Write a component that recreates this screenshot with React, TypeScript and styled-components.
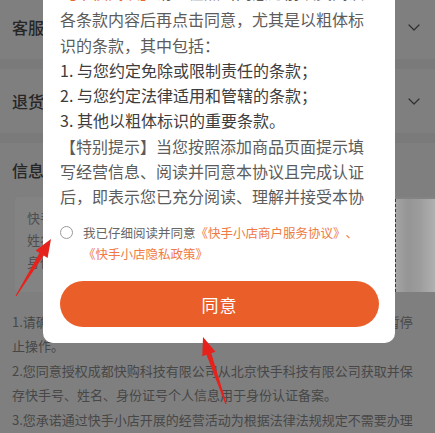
import React from "react";
import styled, { createGlobalStyle } from "styled-components";

const GlobalStyle = createGlobalStyle`
  html, body {
    margin: 0;
    padding: 0;
    width: 435px;
    height: 433px;
    overflow: hidden;
    background: #7f7f7f;
  }
  body {
    font-family: "Noto Sans CJK SC", "Noto Sans", sans-serif;
    text-spacing-trim: space-all;
  }
  * { box-sizing: border-box; }
`;

const Page = styled.div`
  position: relative;
  width: 435px;
  height: 433px;
  overflow: hidden;
  background: #7f7f7f;
`;

const Content = styled.div`
  margin-top: -5px;
  display: flex;
  flex-direction: column;
`;

const SectionRow = styled.div<{ $height?: number }>`
  height: ${(p) => p.$height ?? 64}px;
  display: flex;
  align-items: center;
  justify-content: space-between;
  padding: 0 15px 0 12px;
`;

const RowTitle = styled.span`
  font-size: 16px;
  font-weight: 500;
  color: #262626;
  line-height: 20px;
`;

const Divider = styled.div`
  height: 10px;
  background: #7a7a7a;
`;

const InfoCard = styled.div`
  margin-left: 15px;
  height: 95px;
  display: flex;
  justify-content: space-between;
  background: #838383;
  border-radius: 4px 0 0 4px;
`;

const CardFields = styled.div`
  padding: 10px 0 0 12px;
  font-size: 13px;
  line-height: 22px;
  color: #4e4e4e;
`;

const CardImage = styled.div`
  width: 40px;
  margin-top: 2px;
  border-left: 1px dashed #3a3a3a;
  background: linear-gradient(
    90deg,
    #a4a4a4 0%,
    #959595 30%,
    #9c9c9c 60%,
    #b0b0b0 100%
  );
`;

const Notes = styled.div`
  margin-top: 18px;
  padding: 0 12px;
  font-size: 13px;
  line-height: 23.5px;
  color: #474747;
`;

const Note = styled.p`
  margin: 0 0 2px;
`;

const Modal = styled.div`
  position: absolute;
  top: -20px;
  left: 43px;
  width: 352px;
  background: #ffffff;
  border-radius: 10px;
  padding: 0 16px 16px 17px;
  z-index: 2;
`;

const Terms = styled.div`
  height: 230px;
  overflow: hidden;
  padding-right: 8px;
  font-size: 16px;
  line-height: 25.3px;
  color: #5c5c5c;
`;

const TermPara = styled.div<{ $gap?: number }>`
  margin-bottom: ${(p) => p.$gap ?? 0}px;
`;

const TermItem = styled.div`
  color: #3d3d3d;
`;

const Mark = styled.span`
  color: #e8692f;
`;

const AgreeRow = styled.div`
  margin-top: 11.5px;
  display: flex;
  align-items: flex-start;
  gap: 10px;
  font-size: 12.5px;
  line-height: 21px;
  color: #666666;
`;

const Radio = styled.span`
  flex-shrink: 0;
  width: 13px;
  height: 13px;
  margin-top: 4px;
  border: 1px solid #9a9a9a;
  border-radius: 50%;
`;

const AgreeText = styled.div`
  flex: 1;
`;

const LinkText = styled.span`
  color: #ef7a44;
  white-space: nowrap;
`;

const ConfirmButton = styled.button`
  display: block;
  width: 100%;
  margin-top: 17.5px;
  height: 46px;
  border: none;
  border-radius: 23px;
  background: #ea5f29;
  color: #ffffff;
  font-family: inherit;
  font-size: 17px;
  letter-spacing: 1px;
`;

const Annotations = styled.svg`
  position: absolute;
  left: 0;
  top: 0;
  width: 435px;
  height: 433px;
  pointer-events: none;
  z-index: 3;
`;

const Chevron = () => (
  <svg width="12" height="7" viewBox="0 0 12 7" fill="none">
    <polyline
      points="1,1 6,6 11,1"
      stroke="#2f2f2f"
      strokeWidth="1.2"
      strokeLinecap="round"
      strokeLinejoin="round"
    />
  </svg>
);

export default function App() {
  return (
    <>
      <GlobalStyle />
      <Page>
        <Content>
          <SectionRow>
            <RowTitle>客服</RowTitle>
            <Chevron />
          </SectionRow>
          <Divider />
          <SectionRow>
            <RowTitle>退货</RowTitle>
            <Chevron />
          </SectionRow>
          <Divider />
          <SectionRow $height={54}>
            <RowTitle>信息</RowTitle>
          </SectionRow>
          <InfoCard>
            <CardFields>
              <div>快手号：</div>
              <div>姓名：</div>
              <div>身份证号：</div>
            </CardFields>
            <CardImage />
          </InfoCard>
          <Notes>
            <Note>
              1.请确认以上填写信息真实有效，如信息有误，平台将对您的店铺暂停止操作。
            </Note>
            <Note>
              2.您同意授权成都快购科技有限公司从北京快手科技有限公司获取并保存快手号、姓名、身份证号个人信息用于身份认证备案。
            </Note>
            <Note>
              3.您承诺通过快手小店开展的经营活动为根据法律法规规定不需要办理市场主体登记的经营活动。
            </Note>
          </Notes>
        </Content>

        <Modal>
          <Terms>
            <TermPara $gap={2}>
              <Mark>【审慎阅读】</Mark>请您在点击同意之前认真阅读
            </TermPara>
            <TermPara>
              各条款内容后再点击同意，尤其是以粗体标识的条款，其中包括：
            </TermPara>
            <TermItem>1. 与您约定免除或限制责任的条款；</TermItem>
            <TermItem>2. 与您约定法律适用和管辖的条款；</TermItem>
            <TermItem>3. 其他以粗体标识的重要条款。</TermItem>
            <TermPara>
              【特别提示】当您按照添加商品页面提示填写经营信息、阅读并同意本协议且完成认证后，即表示您已充分阅读、理解并接受本协议的全部内容。
            </TermPara>
          </Terms>
          <AgreeRow>
            <Radio />
            <AgreeText>
              我已仔细阅读并同意<LinkText>《快手小店商户服务协议》</LinkText>
              <LinkText>、</LinkText>
              <LinkText>《快手小店隐私政策》</LinkText>
            </AgreeText>
          </AgreeRow>
          <ConfirmButton>同意</ConfirmButton>
        </Modal>

        <Annotations viewBox="0 0 435 433">
          <polygon
            points="16.4,296.3 43.7,255.6 47.6,258.0 51,239 35.6,250.6 39.5,253.0 15.6,295.7"
            fill="#e5221c"
          />
          <polygon
            points="226.6,403.8 211.3,353.2 215.5,351.7 203,337 202.3,356.3 206.5,354.8 225.4,404.2"
            fill="#e5221c"
          />
        </Annotations>
      </Page>
    </>
  );
}
